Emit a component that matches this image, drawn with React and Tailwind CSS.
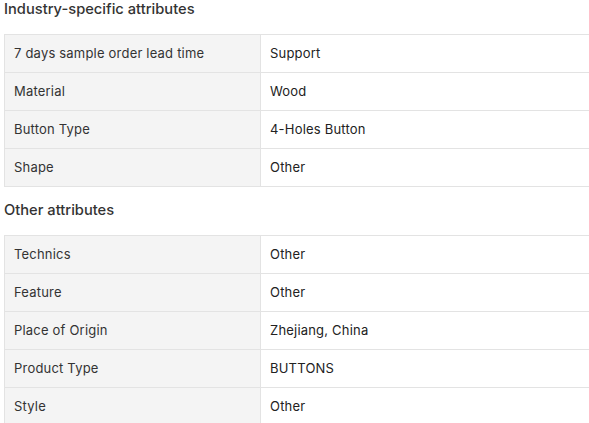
const industry = [
  ['7 days sample order lead time', 'Support'],
  ['Material', 'Wood'],
  ['Button Type', '4-Holes Button'],
  ['Shape', 'Other'],
];

const other = [
  ['Technics', 'Other'],
  ['Feature', 'Other'],
  ['Place of Origin', 'Zhejiang, China'],
  ['Product Type', 'BUTTONS'],
  ['Style', 'Other'],
];

function AttrTable({ rows }) {
  return (
    <table className="w-[590px] border-collapse table-fixed text-[13px] tracking-[0.2px]">
      <tbody>
        {rows.map(([label, value]) => (
          <tr key={label} className="h-[38px]">
            <td className="w-[256px] border border-[#e3e3e3] bg-[#f4f4f4] pl-[9px] text-[#333]">{label}</td>
            <td className="border border-[#e3e3e3] bg-white pl-[9px] text-[#222]">{value}</td>
          </tr>
        ))}
      </tbody>
    </table>
  );
}

export default function App() {
  return (
    <div className="min-h-screen overflow-hidden bg-white pl-[4px] font-['Inter',sans-serif]">
      <h2 className="h-[18px] text-[14.7px] leading-[18px] font-medium text-[#333]">Industry-specific attributes</h2>
      <div className="mt-[16px]">
        <AttrTable rows={industry} />
      </div>
      <h2 className="mt-[14px] h-[18px] text-[14.7px] leading-[18px] font-medium text-[#333]">Other attributes</h2>
      <div className="mt-[16px]">
        <AttrTable rows={other} />
      </div>
    </div>
  );
}
